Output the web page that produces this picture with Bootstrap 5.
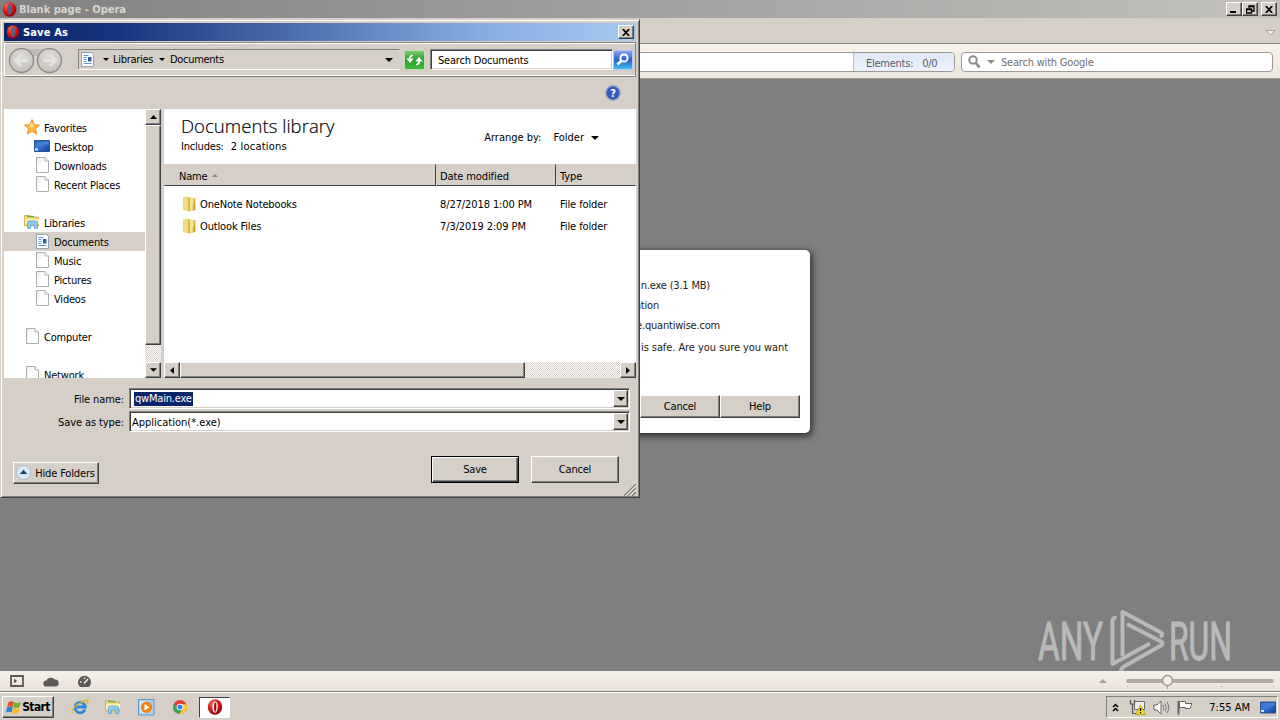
<!DOCTYPE html>
<html lang="en">
<head>
    <meta charset="UTF-8">
    <meta name="viewport" content="width=device-width, initial-scale=1.0">
    <title>Blank page - Opera</title>
    <link href="https://cdn.jsdelivr.net/npm/bootstrap@5.3.3/dist/css/bootstrap.min.css" rel="stylesheet">
    <style>
        body {
            width: 1280px;
            height: 720px;
            overflow: hidden;
            font-family: "DejaVu Sans Condensed", "DejaVu Sans", sans-serif;
            font-stretch: condensed;
            font-size: 11px;
            line-height: 14px;
            letter-spacing: -0.2px;
            color: #000;
            background-color: #7f7f7f;
            white-space: nowrap;
        }

        svg {
            display: block;
            flex: none;
        }

        .face {
            background-color: #d5cfc8;
        }

        .bevel {
            background-color: #d5cfc8;
            border: 1px solid;
            border-color: #fff #404040 #404040 #fff;
            box-shadow: inset -1px -1px 0 #808080;
            border-radius: 0;
            padding: 0;
            color: #000;
            font-size: 11px;
            line-height: 14px;
            letter-spacing: inherit;
            display: flex;
            align-items: center;
            justify-content: center;
            flex: none;
        }

        .sunken {
            background-color: #fff;
            border: 1px solid;
            border-color: #808080 #fff #fff #808080;
            box-shadow: inset 1px 1px 0 #404040, inset -1px -1px 0 #d5cfc8;
        }

        .dither {
            background: repeating-conic-gradient(#fff 0 25%, #d5cfc8 0 50%) 0 0 / 2px 2px;
        }

        .sysbtn {
            width: 16px;
            height: 14px;
        }

        /* browser chrome */
        .main-title {
            height: 18px;
            padding: 0 3px 0 2px;
            background: linear-gradient(90deg, #808080, #c3c1be);
            color: #d8d4cd;
            letter-spacing: 0;
        }

        .main-title .caption {
            padding: 1px 0 0 2px;
        }

        .tab-strip {
            height: 26px;
            padding-right: 4px;
            border-bottom: 1px solid #8c8780;
        }

        .address-bar {
            height: 35px;
            padding: 8px 7px 0 0;
            background: linear-gradient(#f7f3ea, #ece7de);
            border-bottom: 1px solid #a29e95;
            color: #717171;
        }

        .address-field,
        .search-field {
            height: 20px;
            background-color: #fff;
            border: 1px solid #9c9a95;
            border-radius: 4px;
        }

        .address-field {
            width: 955px;
        }

        .search-field {
            margin-left: 6px;
            padding-left: 5px;
        }

        .elements-box {
            width: 101px;
            padding: 3px 0 0 12px;
            background: linear-gradient(#dfe7f6, #edf2fd);
            border-left: 1px solid #b6bcc8;
            border-radius: 0 3px 3px 0;
            color: #5a5e6c;
            letter-spacing: -0.25px;
        }

        .status-strip {
            height: 21px;
            padding: 0 6px 0 10px;
            background: linear-gradient(#f6f1eb, #e9e1da);
            border-bottom: 1px solid #85817c;
        }

        .taskbar {
            height: 28px;
            padding: 2px 2px 1px 2px;
            border-top: 1px solid #fff;
        }

        .start-btn {
            width: 52px;
            height: 22px;
            font-weight: bold;
            font-size: 12px;
            letter-spacing: -0.6px;
        }

        .running-btn {
            width: 31px;
            height: 21px;
            margin-left: 12px;
            border: 1px solid;
            border-color: #404040 #fff #fff #404040;
            background-color: #fff;
        }

        .tray {
            width: 172px;
            height: 22px;
            padding: 0 1px 0 5px;
            border: 1px solid;
            border-color: #808080 #fff #fff #808080;
            letter-spacing: 0;
        }

        /* Save As window */
        .save-window {
            position: absolute;
            left: 0;
            top: 19px;
            width: 640px;
            height: 479px;
            z-index: 3;
            padding: 3px;
            border-color: #d5cfc8 #404040 #404040 #d5cfc8;
            box-shadow: inset 1px 1px 0 #fff, inset -1px -1px 0 #808080;
            background-color: #d5cfc8;
            border-style: solid;
            border-width: 1px;
        }

        .save-title {
            height: 18px;
            padding: 0 2px;
            background: linear-gradient(90deg, #0a246a 0%, #17357f 18%, #5b7fbb 54%, #86abdf 75%, #a6caf0 100%);
            color: #fff;
            letter-spacing: 0.15px;
        }

        .rebar {
            height: 35px;
            margin-top: 1px;
            padding-left: 3px;
            border: 1px solid;
            border-color: #808080 #808080 #808080 #fff;
            box-shadow: inset 0 1px 0 #fff, inset 0 -1px 0 #fff;
        }

        .crumbs {
            width: 322px;
            height: 21px;
            margin-left: 15px;
            border: 1px solid;
            border-color: #808080 #d5cfc8 #fff #808080;
            letter-spacing: -0.3px;
        }

        .find-box {
            width: 183px;
            height: 21px;
            margin-left: 5px;
            padding-left: 7px;
        }

        .panes {
            height: 269px;
        }

        .tree {
            width: 141px;
            padding-top: 9px;
            background-color: #fff;
            overflow: hidden;
        }

        .tree-row {
            height: 19px;
            padding: 2px 0 0 20px;
        }

        .tree-row.sub {
            padding-left: 30px;
        }

        .tree-row.active-row {
            background-color: #d5cfc8;
        }

        .tree-icon {
            width: 16px;
            margin: 0 4px 3px 0;
        }

        .bar16 {
            width: 16px;
        }

        .list-pane {
            width: 472px;
            background-color: #fff;
        }

        .lib-head {
            height: 55px;
            padding: 4px 0 0 17px;
        }

        .lib-title {
            font-family: "Open Sans", "Noto Sans", sans-serif;
            font-stretch: normal;
            font-size: 18.5px;
            font-weight: 300;
            line-height: 26px;
            letter-spacing: 0.05px;
            color: #000;
            -webkit-text-stroke: 0.2px #0a0e22;
        }

        .lib-sub {
            padding-top: 1px;
        }

        .col-head > div {
            height: 22px;
            padding: 3px 0 0 4px;
            border: 1px solid;
            border-color: #d5cfc8 #404040 #404040 #d5cfc8;
            display: flex;
            align-items: center;
            background-color: #d5cfc8;
        }

        .col-head > div.c-date,
        .col-head > div.c-type {
            padding-left: 3px;
        }

        .col-head > div.c-type {
            border-right-color: #d5cfc8;
        }

        .c-name { width: 272px; }
        .c-date { width: 120px; letter-spacing: -0.1px; }
        .c-type { width: 80px; letter-spacing: -0.1px; }

        .file-row {
            height: 22px;
        }

        .file-row .c-name {
            padding-left: 18px;
            letter-spacing: -0.15px;
        }

        .file-row .cell-text {
            padding-top: 2px;
        }

        .combo {
            width: 501px;
            height: 21px;
            padding: 1px;
        }

        .combo .bevel {
            width: 15px;
            height: 17px;
        }

        .form-lbl {
            width: 120px;
            margin-right: 5px;
            padding-top: 2px;
            text-align: right;
            letter-spacing: -0.1px;
        }

        .picked {
            margin-left: 3px;
            padding: 0 1px;
            height: 14px;
            background-color: #0a246a;
            color: #fff;
        }

        .action-btn {
            width: 88px;
            height: 27px;
            padding-top: 1px;
        }

        .default-btn {
            border-color: #000;
            box-shadow: inset 1px 1px 0 #fff, inset -1px -1px 0 #404040, inset -2px -2px 0 #808080;
        }

        .folders-btn {
            width: 86px;
            height: 22px;
            margin-top: 6px;
            padding-right: 1px;
            letter-spacing: -0.15px;
        }

        /* download prompt behind the Save As window */
        .prompt {
            position: absolute;
            left: 470px;
            top: 250px;
            width: 340px;
            height: 183px;
            z-index: 2;
            padding: 26px 10px 0 0;
            background-color: #fff;
            border-radius: 5px;
            box-shadow: 1px 2px 7px 1px #2a2a2a;
            text-align: right;
            color: #1a1a1a;
        }

        .prompt-line {
            height: 20px;
            padding-top: 3px;
        }

        .prompt-ask {
            height: 59px;
            padding: 5px 12px 0 0;
            letter-spacing: -0.08px;
        }

        .prompt .bevel {
            width: 80px;
            height: 23px;
            padding-top: 1px;
        }

        .watermark {
            position: absolute;
            left: 1030px;
            top: 605px;
            z-index: 4;
            font-family: Roboto, sans-serif;
            font-stretch: normal;
            letter-spacing: 0;
            pointer-events: none;
            opacity: .45;
        }
    </style>
</head>
<body class="d-flex flex-column">
    <!-- shared icons -->
    <svg width="0" height="0" class="position-absolute">
        <defs>
            <radialGradient id="gRed" cx=".35" cy=".25" r=".9">
                <stop offset="0" stop-color="#ff6a5a"/><stop offset=".5" stop-color="#d31219"/><stop offset="1" stop-color="#7a0006"/>
            </radialGradient>
            <linearGradient id="gFolder"><stop offset="0" stop-color="#f6e588"/><stop offset="1" stop-color="#d9b53c"/></linearGradient>
            <linearGradient id="gScreen" x2="1" y2="1"><stop offset="0" stop-color="#1b4fae"/><stop offset=".5" stop-color="#3272d2"/><stop offset="1" stop-color="#123c93"/></linearGradient>
            <linearGradient id="gPage" x2="1" y2="1"><stop offset="0" stop-color="#e9ecee"/><stop offset=".5" stop-color="#fff"/></linearGradient>
            <linearGradient id="gGreen" y2="1" x2="0"><stop offset="0" stop-color="#7ccb6c"/><stop offset=".5" stop-color="#2c9f2e"/><stop offset="1" stop-color="#3fbb3a"/></linearGradient>
            <linearGradient id="gBlue" y2="1" x2="0"><stop offset="0" stop-color="#8ea4ee"/><stop offset=".5" stop-color="#2a5fd2"/><stop offset="1" stop-color="#41c4f0"/></linearGradient>
            <radialGradient id="gNav" cx=".5" cy=".3" r=".7"><stop offset="0" stop-color="#dddbd8"/><stop offset="1" stop-color="#c4c1bc"/></radialGradient>
            <symbol id="opera" viewBox="0 0 16 16">
                <ellipse cx="8" cy="8" rx="7.2" ry="7.8" fill="url(#gRed)"/>
                <ellipse cx="8" cy="8" rx="2.7" ry="5.7" fill="#fff"/>
                <ellipse cx="8.2" cy="8" rx="1.2" ry="4.7" fill="#a80d14"/>
            </symbol>
            <symbol id="operaTitle" viewBox="0 0 16 16">
                <ellipse cx="8" cy="8" rx="7.2" ry="7.8" fill="url(#gRed)"/>
                <ellipse cx="8" cy="8" rx="2.6" ry="5.6" fill="#5b5f78"/>
            </symbol>
            <symbol id="page" viewBox="0 0 16 16">
                <path d="M2.5.5H11L14.5 4v11.5h-12z" fill="url(#gPage)" stroke="#a9adb0"/>
                <path d="M11 .5V4h3.500" fill="#fff" stroke="#a9adb0"/>
            </symbol>
            <symbol id="doc" viewBox="0 0 16 15">
                <path d="M2.5.5h10l2 2v12h-12z" fill="#fff" stroke="#8fa3b8"/>
                <path d="M4.500 3.500h5M4.500 5.500h3M4.500 7.500h3M4.500 9.500h3M4.500 11.500h8" stroke="#5f8fd6"/>
                <path d="M9 5h3.500v4.500H9z" fill="#2c5fa8"/>
            </symbol>
            <symbol id="star" viewBox="0 0 16 16">
                <path d="M8 .6l2.200 5 5.300.5-4 3.600 1.200 5.400L8 12.300l-4.700 2.800 1.200-5.400-4-3.600 5.300-.5z" fill="#fdb53b" stroke="#e0801c" stroke-width=".8"/>
                <path d="M8 3l1.500 3.500L8 9 5 7z" fill="#ffe08a"/>
            </symbol>
            <symbol id="desk" viewBox="0 0 16 12">
                <path d="M.5.5h15v11H.5z" fill="url(#gScreen)" stroke="#2c528f"/>
                <path d="M1 9.500q4-3 14-6v-2H1z" fill="#5a9bea" fill-opacity=".4"/>
                <path d="M1 8.500h3v2H1z" fill="#cfe4fa"/>
            </symbol>
            <symbol id="lib" viewBox="0 0 16 16">
                <path d="M.5 1.500h5l1 1.500h8v9H.5z" fill="#f2dc7c" stroke="#c9a845" stroke-width=".8"/>
                <path d="M3 2.500h7" stroke="#5fae53" stroke-width="1.300"/>
                <path d="M1 5h14v5H1z" fill="#fbeeb0"/>
                <path d="M3.500 14.500V9q0-2 2-2h5.500q2.500 0 2.500 2v5.500h-3V11h-4v3.500z" fill="#8accee" stroke="#5fa6d2" stroke-width=".8"/>
            </symbol>
            <symbol id="folder" viewBox="0 0 16 16">
                <path d="M1 1.500L6.500.5l1.500 1 5.500 1V14l-6 1.500L1 14z" fill="url(#gFolder)"/>
                <path d="M1 1.500h5.500v13L1 13.500z" fill="#f0dc7e"/>
                <path d="M7 2v13M12.500 8v6" stroke="#c6a030" fill="none"/>
                <path d="M8 2h3.500v6l-1 1.500v5L8 15z" fill="#f5e38c"/>
            </symbol>
            <symbol id="down" viewBox="0 0 8 4"><path d="M0 0h8L4 4z"/></symbol>
            <symbol id="cross" viewBox="0 0 8 7"><path d="M.8 0l6.400 7M7.200 0L.8 7" stroke="#000" stroke-width="1.700"/></symbol>
        </defs>
    </svg>

    <!-- browser window -->
    <div class="main-title d-flex align-items-center fw-bold">
        <svg width="15" height="15"><use href="#operaTitle"/></svg>
        <span class="caption flex-grow-1">Blank page - Opera</span>
        <span class="bevel sysbtn"><svg width="8" height="8"><path d="M0 6h6v2H0z"/></svg></span>
        <span class="bevel sysbtn"><svg width="9" height="9"><path d="M3 3V1h5v5H6M3 1.500h5M.5 4v4h5V4zM0 4.500h6" fill="none" stroke="#000" stroke-width="1.300"/></svg></span>
        <span class="bevel sysbtn" style="margin-left:3px"><svg width="8" height="7"><use href="#cross"/></svg></span>
    </div>

    <div class="tab-strip face d-flex align-items-center justify-content-end">
        <svg width="11" height="8" class="mt-1"><path d="M1 1.500h9L5.500 6z" fill="#f4f1ec" stroke="#a5a19b"/></svg>
    </div>

    <div class="address-bar d-flex">
        <div class="address-field d-flex justify-content-end">
            <div class="elements-box d-flex align-items-center"><span>Elements:</span><span style="padding-left:9px">0/0</span></div>
        </div>
        <div class="search-field d-flex align-items-center flex-grow-1">
            <svg width="16" height="14"><circle cx="6" cy="5" r="3.700" fill="none" stroke="#8a8a8a" stroke-width="2"/><path d="M8.500 7.500l4 5" stroke="#8a8a8a" stroke-width="2.800"/></svg>
            <svg width="8" height="4" class="ms-1" fill="#8a8a8a"><use href="#down"/></svg>
            <span style="padding:1px 0 0 6px">Search with Google</span>
        </div>
    </div>

    <div class="flex-grow-1"></div>

    <div class="status-strip d-flex align-items-center">
        <svg width="14" height="12"><path d="M1 1h12v10H1z" fill="none" stroke="#5e5a57" stroke-width="1.800"/><path d="M4 3.500l3 2.500-3 2.500z" fill="#5e5a57"/></svg>
        <svg width="16" height="11" style="margin-left:19px"><path d="M3.500 10.500a3 3 0 0 1-.3-6 5 4.500 0 0 1 8.600-1 3.500 3.500 0 0 1 .7 7z" fill="#5e5a57"/></svg>
        <svg width="15" height="13" style="margin-left:18px"><path d="M3 12a6.500 6.500 0 1 1 9 0z" fill="#5e5a57"/><path d="M7 8.500l4-4.500M3 7h1.500M7.500 2.500V4" stroke="#efe9e3" stroke-width="1.500"/></svg>
        <div class="flex-grow-1"></div>
        <svg width="175" height="16"><path d="M0 10l4-4 4 4z" fill="#a39e99"/><path d="M29 8h144" stroke="#b0a8a3" stroke-width="4" stroke-linecap="round"/><path d="M28 13.500h1M122 13.500h1M174 13.500h1" stroke="#a39e99"/><path d="M68.500 13v3" stroke="#a39e99"/><circle cx="68.500" cy="7.500" r="5" fill="#f3eeea" stroke="#9d9792" stroke-width="1.500"/></svg>
    </div>

    <div class="taskbar face d-flex align-items-center">
        <div class="bevel start-btn">
            <svg width="16" height="15" viewBox="0 0 16 15">
                <path d="M2.500 2q3-1.700 5.500 0L6.800 7Q4 5.400 1.200 7z" fill="#e8541f"/><path d="M8.300 2.200q3 1.500 6.500-.2l-1.300 5.200q-3 1.500-6.300 0z" fill="#6fb52c"/>
                <path d="M1 7.400q3-1.700 5.700 0l-1.300 5q-2.700-1.500-5.400 0z" fill="#2f7fd6"/><path d="M7 7.700q3 1.500 6.400 0L12.200 13q-3 1.500-6.500 0z" fill="#f8bd1c"/>
            </svg><span>Start</span>
        </div>
        <svg width="18" height="16" viewBox="0 0 18 16" style="margin-left:17px">
            <path d="M14 10.500A5.200 5.200 0 1 1 14.300 8H5" fill="none" stroke="#2b8ad8" stroke-width="2.800"/>
            <path d="M1.500 14.500Q-.5 11 6 6T17 1.500q.5 1.500-2 4" fill="none" stroke="#e8b62e" stroke-width="1.400"/>
        </svg>
        <svg width="16" height="16" style="margin-left:16px"><use href="#lib"/></svg>
        <svg width="17" height="17" viewBox="0 0 17 17" style="margin-left:17px">
            <path d="M.5.5h15.500v15.500H.5z" fill="#a7d0f2" stroke="#5d96cb"/><path d="M2 2h6v12H2z" fill="#d6ebfb"/>
            <circle cx="8.500" cy="8.200" r="5.700" fill="#f08416"/><path d="M6.500 5l5 3.300-5 3.300z" fill="#fff"/>
        </svg>
        <svg width="14" height="14" viewBox="0 0 14 14" style="margin-left:18px">
            <circle cx="7" cy="7" r="7" fill="#e2402f"/><path d="M1 3.500A7 7 0 0 0 6.500 14L9.500 8.500 5 8.500z" fill="#3aa655"/><path d="M13.400 4.200A7 7 0 0 1 6.500 14l3.300-5.500L8 4.200z" fill="#f9cf2f"/>
            <circle cx="7" cy="7" r="3.300" fill="#fff"/><circle cx="7" cy="7" r="2.500" fill="#3f7fe8"/>
        </svg>
        <div class="running-btn d-flex align-items-center justify-content-center"><svg width="16" height="16"><use href="#opera"/></svg></div>
        <div class="flex-grow-1"></div>
        <div class="tray d-flex align-items-center">
            <svg width="8" height="9"><path d="M1 4l2.500-2.500L6 4M1 8l2.500-2.500L6 8" fill="none" stroke="#000" stroke-width="1.500"/></svg>
            <svg width="17" height="16" viewBox="0 0 17 16" style="margin-left:9px">
                <path d="M5.500 2.500h10v8h-10z" fill="#eee" stroke="#6b6b6b"/><path d="M1.500 1v4h4V1M3.500 5v9.500H7" fill="none" stroke="#555" stroke-width="1.200"/>
                <path d="M11.500 6l5 9.500h-10z" fill="#f7da1b" stroke="#a58c00" stroke-width=".6"/><path d="M11.500 9v3M11.500 13v1.300" stroke="#000" stroke-width="1.300"/>
            </svg>
            <svg width="17" height="15" viewBox="0 0 17 15" style="margin-left:7px"><path d="M1 5h3l4-4v13l-4-4H1z" fill="#fff" stroke="#666"/><path d="M10 5q1.500 2.500 0 5M12 3.500q2.500 4 0 8M14 2q3.500 5.500 0 11" fill="none" stroke="#777"/></svg>
            <svg width="17" height="15" viewBox="0 0 17 15" style="margin-left:7px"><path d="M1.500 1v13.500" stroke="#666" stroke-width="2"/><path d="M2.500 1.500h6v2h6.500l-2 5H8.500v-1h-6z" fill="#fff" stroke="#666"/></svg>
            <span class="flex-grow-1 text-end" style="padding:1px 6px 0 0">7:55 AM</span>
            <svg width="16" height="13" class="ms-1"><use href="#desk"/></svg>
        </div>
    </div>

    <!-- download prompt -->
    <div class="prompt">
        <div class="prompt-line" style="padding-right:90px">n.exe (3.1 MB)</div>
        <div class="prompt-line" style="padding-right:141px">ation</div>
        <div class="prompt-line" style="padding-right:80px">e.quantiwise.com</div>
        <div class="prompt-ask">is safe. Are you sure you want</div>
        <div class="d-flex justify-content-end">
            <div class="bevel">Cancel</div>
            <div class="bevel">Help</div>
        </div>
    </div>

    <!-- Save As window -->
    <div class="save-window">
        <div class="save-title d-flex align-items-center fw-bold">
            <svg width="14" height="16"><use href="#operaTitle"/></svg>
            <span class="flex-grow-1" style="padding:1px 0 0 3px">Save As</span>
            <span class="bevel sysbtn"><svg width="8" height="7"><use href="#cross"/></svg></span>
        </div>

        <div class="rebar d-flex align-items-center">
            <svg width="55" height="27" viewBox="0 0 55 27" class="mt-1">
                <path d="M12 1h30v7H12z" fill="#bfbcb6"/>
                <circle cx="13.500" cy="12.500" r="12" fill="url(#gNav)" stroke="#8d8a85" stroke-width="1.300"/>
                <circle cx="41.500" cy="12.500" r="12" fill="url(#gNav)" stroke="#8d8a85" stroke-width="1.300"/>
                <path d="M20 12.500H8M13 7l-5.500 5.500L13 18M35 12.500h12M42 7l5.500 5.500L42 18" fill="none" stroke="#e6e4e1" stroke-width="3"/>
            </svg>
            <div class="crumbs d-flex align-items-center">
                <svg width="16" height="15"><use href="#doc"/></svg>
                <svg width="6" height="3" style="margin-left:8px"><use href="#down"/></svg>
                <span style="margin-left:4px">Libraries</span>
                <svg width="6" height="3" style="margin-left:6px"><use href="#down"/></svg>
                <span class="flex-grow-1" style="margin-left:5px">Documents</span>
                <svg width="8" height="4" style="margin-right:6px"><use href="#down"/></svg>
            </div>
            <svg width="21" height="20" viewBox="0 0 21 20" style="margin-left:4px">
                <path d="M.5.5h20v19H.5z" fill="url(#gGreen)" stroke="#c5d9bd"/>
                <path d="M9 5.500Q5.500 5 5.500 9M3.500 9l2.500 3 2.500-3zM12 14.500q3.500.5 3.500-3.500M12.500 11l2.500-3 2.500 3z" fill="#fff" stroke="#fff" stroke-width="1.200"/>
            </svg>
            <div class="find-box sunken d-flex align-items-center"><span style="padding-top:2px">Search Documents</span></div>
            <svg width="20" height="20" viewBox="0 0 20 20">
                <path d="M.5.5h19v19H.5z" fill="url(#gBlue)" stroke="#b8cdf2"/>
                <circle cx="11" cy="8" r="3.600" fill="none" stroke="#fff" stroke-width="2"/><path d="M8.500 10.500l-4 4" stroke="#fff" stroke-width="2.600"/>
            </svg>
        </div>

        <div class="d-flex justify-content-end align-items-center" style="height:32px;padding-right:15px">
            <svg width="16" height="16" viewBox="0 0 16 16">
                <circle cx="8" cy="8" r="7.200" fill="#3559b8" stroke="#8fa2cf" stroke-width="1.400"/>
                <text x="8" y="12.200" text-anchor="middle" fill="#fff" font-size="11" font-weight="bold">?</text>
            </svg>
        </div>

        <div class="panes d-flex">
            <div class="tree">
                <div class="tree-row d-flex align-items-center"><svg width="16" height="16" class="tree-icon"><use href="#star"/></svg>Favorites</div>
                <div class="tree-row sub d-flex align-items-center"><svg width="16" height="12" class="tree-icon"><use href="#desk"/></svg>Desktop</div>
                <div class="tree-row sub d-flex align-items-center"><svg width="16" height="16" class="tree-icon"><use href="#page"/></svg>Downloads</div>
                <div class="tree-row sub d-flex align-items-center"><svg width="16" height="16" class="tree-icon"><use href="#page"/></svg>Recent Places</div>
                <div class="tree-row"></div>
                <div class="tree-row d-flex align-items-center"><svg width="16" height="16" class="tree-icon"><use href="#lib"/></svg>Libraries</div>
                <div class="tree-row sub active-row d-flex align-items-center"><svg width="16" height="15" class="tree-icon"><use href="#doc"/></svg>Documents</div>
                <div class="tree-row sub d-flex align-items-center"><svg width="16" height="16" class="tree-icon"><use href="#page"/></svg>Music</div>
                <div class="tree-row sub d-flex align-items-center"><svg width="16" height="16" class="tree-icon"><use href="#page"/></svg>Pictures</div>
                <div class="tree-row sub d-flex align-items-center"><svg width="16" height="16" class="tree-icon"><use href="#page"/></svg>Videos</div>
                <div class="tree-row"></div>
                <div class="tree-row d-flex align-items-center"><svg width="16" height="16" class="tree-icon"><use href="#page"/></svg>Computer</div>
                <div class="tree-row"></div>
                <div class="tree-row d-flex align-items-center"><svg width="16" height="16" class="tree-icon"><use href="#page"/></svg>Network</div>
            </div>
            <div class="bar16 dither d-flex flex-column">
                <div class="bevel" style="height:16px"><svg width="7" height="4"><path d="M0 4l3.500-4L7 4z"/></svg></div>
                <div class="bevel" style="height:220px"></div>
                <div class="flex-grow-1"></div>
                <div class="bevel" style="height:16px"><svg width="7" height="4"><use href="#down"/></svg></div>
            </div>
            <div style="width:3px"></div>
            <div class="list-pane d-flex flex-column">
                <div class="lib-head d-flex justify-content-between">
                    <div>
                        <div class="lib-title">Documents library</div>
                        <div class="lib-sub d-flex"><span>Includes:</span><span style="margin-left:7px;letter-spacing:0.2px">2 locations</span></div>
                    </div>
                    <div class="d-flex align-items-center" style="height:49px;padding-right:37px;letter-spacing:0">
                        <span>Arrange by:</span><span style="margin:0 7px 0 12px">Folder</span>
                        <svg width="8" height="4"><use href="#down"/></svg>
                    </div>
                </div>
                <div class="col-head d-flex">
                    <div class="c-name" style="padding-left:14px">Name<svg width="6" height="3" style="margin:0 0 2px 5px"><path d="M0 3l3-3 3 3z" fill="#888"/></svg></div>
                    <div class="c-date">Date modified</div>
                    <div class="c-type">Type</div>
                </div>
                <div class="flex-grow-1" style="padding-top:7px">
                    <div class="file-row d-flex align-items-center">
                        <div class="c-name d-flex align-items-center"><svg width="16" height="16" style="margin-right:2px"><use href="#folder"/></svg><span class="cell-text">OneNote Notebooks</span></div>
                        <div class="c-date ps-1 cell-text">8/27/2018 1:00 PM</div>
                        <div class="c-type ps-1 cell-text">File folder</div>
                    </div>
                    <div class="file-row d-flex align-items-center">
                        <div class="c-name d-flex align-items-center"><svg width="16" height="16" style="margin-right:2px"><use href="#folder"/></svg><span class="cell-text">Outlook Files</span></div>
                        <div class="c-date ps-1 cell-text">7/3/2019 2:09 PM</div>
                        <div class="c-type ps-1 cell-text">File folder</div>
                    </div>
                </div>
                <div class="dither d-flex" style="height:16px">
                    <div class="bevel bar16"><svg width="4" height="7"><path d="M4 0v7L0 3.500z"/></svg></div>
                    <div class="bevel" style="width:345px"></div>
                    <div class="flex-grow-1"></div>
                    <div class="bevel bar16"><svg width="4" height="7"><path d="M0 0v7l4-3.500z"/></svg></div>
                </div>
            </div>
        </div>

        <div class="d-flex align-items-center" style="margin-top:10px">
            <div class="form-lbl">File name:</div>
            <div class="combo sunken d-flex align-items-center">
                <span class="picked">qwMain.exe</span>
                <div class="bevel ms-auto"><svg width="8" height="4"><use href="#down"/></svg></div>
            </div>
        </div>
        <div class="d-flex align-items-center" style="margin-top:2px">
            <div class="form-lbl">Save as type:</div>
            <div class="combo sunken d-flex align-items-center">
                <span style="padding:2px 0 0 1px;letter-spacing:0">Application(*.exe)</span>
                <div class="bevel ms-auto"><svg width="8" height="4"><use href="#down"/></svg></div>
            </div>
        </div>

        <div class="d-flex" style="margin-top:24px;padding-left:9px">
            <div class="bevel folders-btn">
                <svg width="16" height="16" viewBox="0 0 17 17"><circle cx="8" cy="8" r="7.500" fill="#d9e8f3" stroke="#a5bccd"/><path d="M4 9.500L8 5l4 4.500z" fill="#1c4560"/></svg>
                <span style="padding:1px 0 0 3px">Hide Folders</span>
            </div>
            <div class="bevel action-btn default-btn" style="margin-left:332px">Save</div>
            <div class="bevel action-btn" style="margin-left:12px">Cancel</div>
        </div>
        <div class="d-flex justify-content-end">
            <svg width="12" height="12"><path d="M0 12L12 0M4 12l8-8M8 12l4-4" stroke="#7d7973" stroke-width="1.300"/><path d="M1.500 12L12 1.500M5.500 12L12 5.500" stroke="#fff" stroke-width=".8"/></svg>
        </div>
    </div>

    <svg class="watermark" width="225" height="75" fill="#fff">
        <text x="8" y="54.500" font-size="53" textLength="65" lengthAdjust="spacingAndGlyphs" stroke="#fff" stroke-width="1">ANY</text>
        <text x="139" y="54.500" font-size="53" textLength="63" lengthAdjust="spacingAndGlyphs" stroke="#fff" stroke-width="1">RUN</text>
        <g fill="none" stroke="#fff" stroke-width="4" stroke-linejoin="round">
            <path d="M86.500 13q-4-1-4 3v43L120 38.500"/>
            <path d="M130 32q4-2.500 1-4.500L92.500 7v44"/>
            <path d="M97 19l34 17.500q3 2 0 4L94 61.500q-3 2-3 5"/>
        </g>
    </svg>

    <script src="https://cdn.jsdelivr.net/npm/bootstrap@5.3.3/dist/js/bootstrap.bundle.min.js"></script>
</body>
</html>
